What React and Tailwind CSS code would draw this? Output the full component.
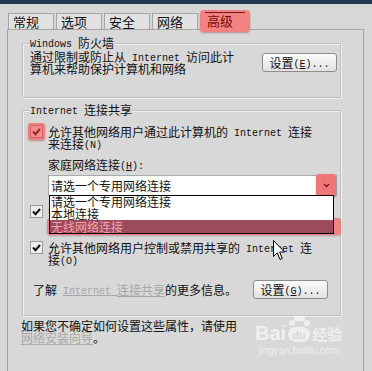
import React from 'react';

// Texte latin à demi-chasse (comme SimSun), sans agrandir la ligne
const M = ({ children, className = '' }) => (
  <span className={`inline-block h-[12px] whitespace-pre align-top font-['Liberation_Mono',monospace] text-[10px] leading-[16px] ${className}`}>
    {children}
  </span>
);

const Check = () => (
  <svg width="9" height="8" viewBox="0 0 9 8">
    <path d="M1 3.5 L3.5 6.2 L8 1" fill="none" stroke="#111" strokeWidth="2" />
  </svg>
);

// Case à cocher, avec surlignage rouge optionnel
const CheckBox = ({ hot }) => (
  <span className="relative -mt-[1px] flex h-[13px] w-[13px] shrink-0 items-center justify-center border border-[#9c9c9c] bg-[#eeeeee]">
    <Check />
    {hot && (
      <span className="absolute -inset-[3px] rounded-[3px] bg-[#ff3a3a]/55 shadow-[0_1px_2px_rgba(120,0,0,0.35)]" />
    )}
  </span>
);

const Button = ({ children, className = '' }) => (
  <div
    className={`flex h-[19px] w-[75px] items-center justify-center rounded-[3px] border border-[#8d8d8d] bg-gradient-to-b from-[#fbfbfb] to-[#e2e2e2] text-[12px] leading-[12px] ${className}`}
  >
    <span className="h-[12px]">{children}</span>
  </div>
);

const Group = ({ title, className = '', children }) => (
  <div className={`w-[319px] border border-[#c0c0c0] shadow-[inset_1px_1px_0_#efefef,1px_1px_0_#efefef] ${className}`}>
    <div className="-mt-[7px] ml-[6px] h-[12px] w-fit bg-[#d8d8d8] px-[1px] leading-[12px]">{title}</div>
    {children}
  </div>
);

const tabs = ['常规', '选项', '安全', '网络'];

export default function App() {
  return (
    <div className="relative h-[371px] w-[372px] overflow-hidden bg-[#d7d7d7] font-['Noto_Sans_CJK_SC',sans-serif] text-[12px] leading-[12px] text-[#111]">
      {/* barre de titre */}
      <div className="h-[4px] bg-[#1e3951]" />

      {/* onglets */}
      <div className="mt-[9px] flex h-[16px] items-end gap-[2px] pl-[8px]">
        {tabs.map((t) => (
          <div
            key={t}
            className="h-[16px] w-[46px] border border-b-0 border-[#a6a6a6] bg-[#e2e2e2] pl-[4px] text-[13px] leading-[16px]"
          >
            {t}
          </div>
        ))}
        <div className="relative z-10 -mb-[3px] h-[22px] w-[50px] rounded-[4px] bg-[#f28282] shadow-[0_1px_2px_rgba(120,0,0,0.35)]">
          <div className="mx-[5px] mt-[2px] border-t border-[#6e1c1c] pl-[2px] text-[13px] leading-[15px] text-[#7c0a0a]">
            高级
          </div>
        </div>
      </div>

      {/* panneau */}
      <div className="ml-[7px] h-[342px] w-[357px] border border-b-0 border-[#a4a4a4] bg-[#d8d8d8] pl-[14px] pt-[13px]">
        <Group title={<><M>Windows </M>防火墙</>} className="h-[55px]">
          <div className="mt-[2px] flex items-start justify-between pl-[7px] pr-[3px]">
            <div className="whitespace-nowrap">
              通过限制或防止从<M> Internet </M>访问此计
              <br />
              算机来帮助保护计算机和网络
            </div>
            <Button className="mt-[2px]">
              设置<M>(<u>E</u>)...</M>
            </Button>
          </div>
        </Group>

        <Group title={<><M>Internet </M>连接共享</>} className="mt-[12px] h-[206px]">
          {/* case 1 */}
          <div className="mt-[10px] flex gap-[5px] pl-[7px]">
            <CheckBox hot />
            <div className="whitespace-nowrap">
              允许其他网络用户通过此计算机的<M> Internet </M>连接
              <br />
              来连接<M>(N)</M>
            </div>
          </div>

          <div className="mt-[9px] pl-[25px]">
            家庭网络连接<M>(<u>H</u>):</M>
          </div>

          {/* liste déroulante */}
          <div className="relative ml-[25px] mt-[4px] flex h-[21px] w-[289px] border border-[#a9a9a9] bg-white">
            <div className="flex-1 pl-[2px] pt-[4px]">请选一个专用网络连接</div>
            <div className="-my-[2px] flex w-[20px] items-center justify-center rounded-[3px] bg-[#f07777] shadow-[0_1px_2px_rgba(120,0,0,0.35)]">
              <svg width="7" height="5" viewBox="0 0 7 5">
                <path d="M1 1 L3.5 3.5 L6 1" fill="none" stroke="#7a1010" strokeWidth="1.3" />
              </svg>
            </div>
            <div className="absolute -left-[2px] top-[42px] z-10 h-[17px] w-[294px] rounded-[3px] bg-[#f36a6a]/75 shadow-[0_1px_2px_rgba(120,0,0,0.3)]" />
            <div className="absolute left-0 top-[19px] z-20 w-[285px] border border-black bg-white">
              <div className="h-[12px] pl-[1px]">请选一个专用网络连接</div>
              <div className="h-[12px] pl-[1px]">本地连接</div>
              <div className="h-[13px] bg-[#9c4a5e] pl-[1px] pt-[1px] text-[#f6a3ad]">无线网络连接</div>
            </div>
          </div>

          {/* case 2 (cachée sous la liste) */}
          <div className="mt-[10px] flex gap-[5px] pl-[7px]">
            <CheckBox />
            <div className="whitespace-nowrap">
              每当网络上的计算机试图访问<M> Internet </M>时建
              <br />
              立一个拨号连接<M>(D)</M>
            </div>
          </div>

          {/* case 3 */}
          <div className="mt-[12px] flex gap-[5px] pl-[7px]">
            <CheckBox />
            <div className="whitespace-nowrap">
              允许其他网络用户控制或禁用共享的<M> Internet </M>连
              <br />
              接<M>(O)</M>
            </div>
          </div>

          <div className="mt-[14px] flex h-[19px] items-center justify-between pl-[10px] pr-[12px]">
            <div className="h-[12px] whitespace-nowrap">
              了解<M> </M>
              <span className="text-[#a7a7a7] underline">
                <M className="underline">Internet </M>连接共享
              </span>
              的更多信息。
            </div>
            <Button>
              设置<M>(<u>G</u>)...</M>
            </Button>
          </div>
        </Group>

        <div className="-ml-[1px] mt-[4px] whitespace-nowrap">
          如果您不确定如何设置这些属性，请使用
          <br />
          <span className="text-[#a9a9a9] underline">网络安装向导</span>。
        </div>
      </div>

      {/* curseur */}
      <svg className="absolute left-[273px] top-[240px]" width="13" height="21" viewBox="0 0 13 21">
        <path d="M0.5 0.5 L0.5 16.5 L4.3 12.8 L7 19.5 L9.3 18.5 L6.6 12 L11.5 12 Z" fill="#fff" stroke="#000" strokeWidth="1" />
      </svg>

      {/* filigrane */}
      <div className="absolute left-[255px] top-[315px] flex flex-col items-center text-white/60">
        <div className="flex items-end">
          <span className="font-['Liberation_Sans',sans-serif] text-[20px] font-bold leading-[20px]">Bai</span>
          <span className="relative mx-[1px] flex h-[28px] w-[24px] flex-col items-center">
            <svg width="22" height="12" viewBox="0 0 22 12">
              <circle cx="4" cy="8" r="3" fill="currentColor" />
              <circle cx="9" cy="3.5" r="3" fill="currentColor" />
              <circle cx="14" cy="3.5" r="3" fill="currentColor" />
              <circle cx="19" cy="8" r="3" fill="currentColor" />
            </svg>
            <span className="flex h-[15px] w-[22px] items-center justify-center rounded-full bg-white/60 font-['Liberation_Sans',sans-serif] text-[11px] font-bold text-[#d8d8d8]">
              du
            </span>
          </span>
          <span className="text-[15px] font-bold leading-[18px]">经验</span>
        </div>
        <div className="mt-[3px] font-['Liberation_Sans',sans-serif] text-[10px] leading-[10px]">jingyan.baidu.com</div>
      </div>
    </div>
  );
}
